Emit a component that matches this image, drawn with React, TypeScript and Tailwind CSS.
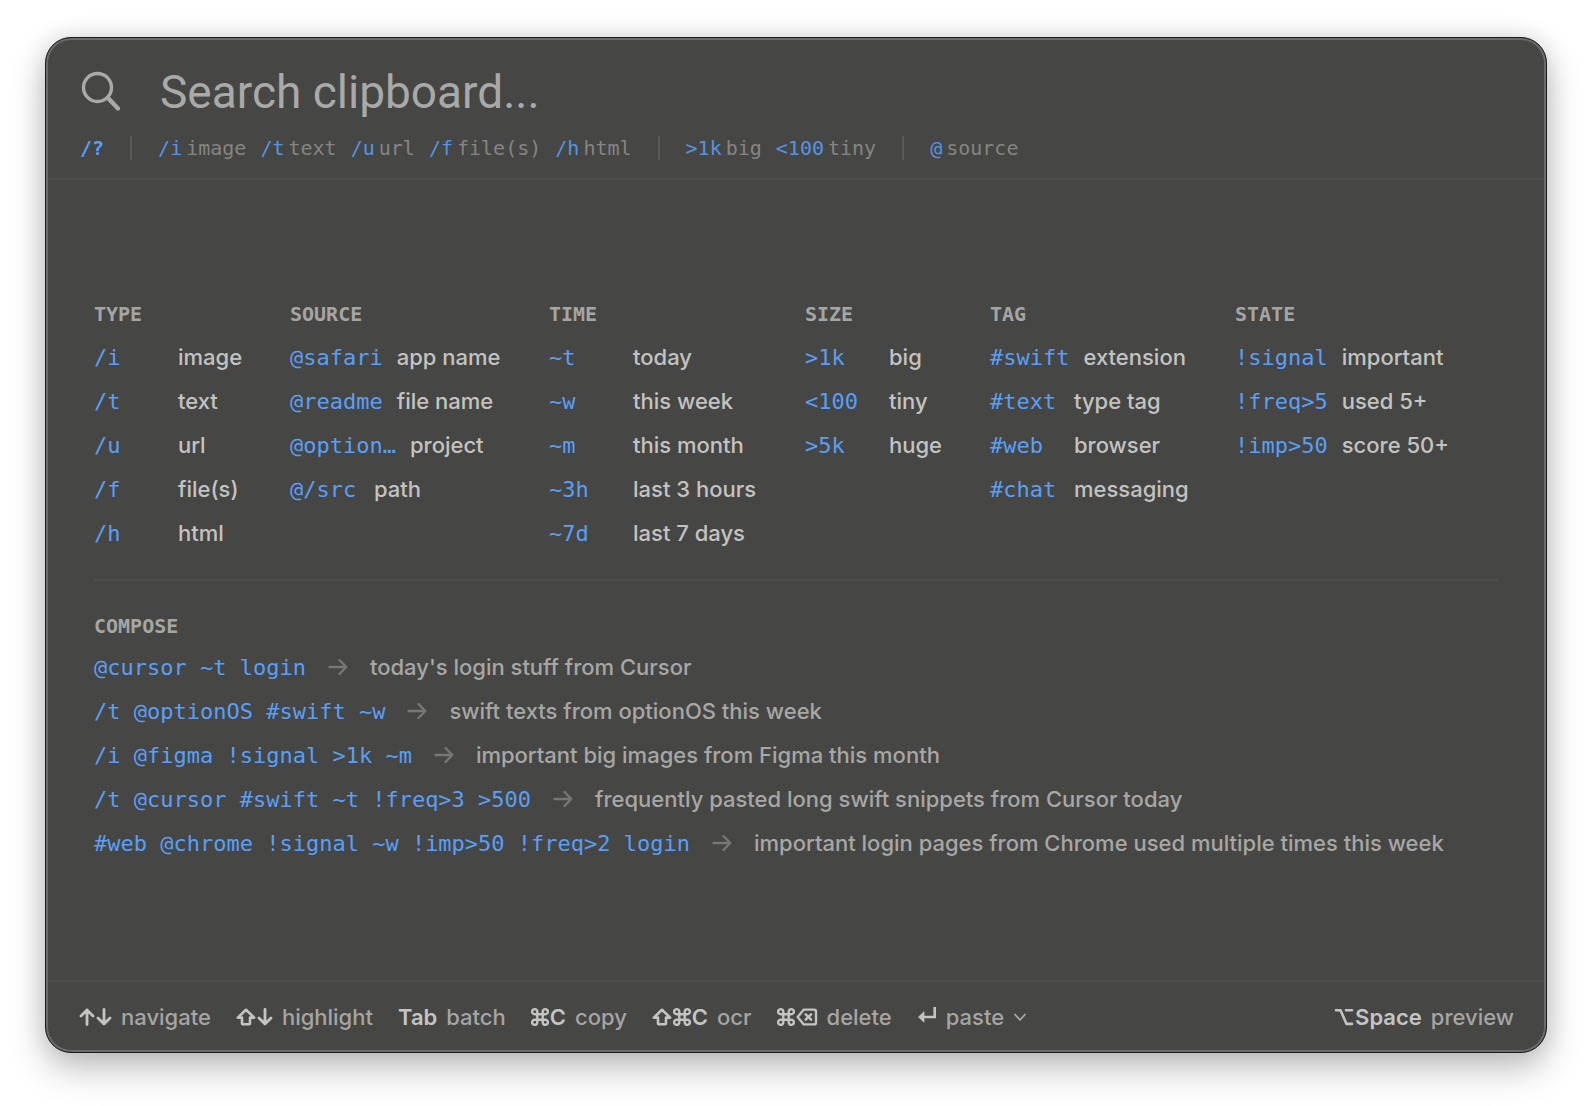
import React from 'react';

interface Hint {
    token: string;
    label: string;
}

interface Section {
    title: string;
    rows: Hint[];
}

const chipGroups: Hint[][] = [
    [
        { token: '/i', label: 'image' },
        { token: '/t', label: 'text' },
        { token: '/u', label: 'url' },
        { token: '/f', label: 'file(s)' },
        { token: '/h', label: 'html' },
    ],
    [
        { token: '>1k', label: 'big' },
        { token: '<100', label: 'tiny' },
    ],
    [{ token: '@', label: 'source' }],
];

const sections: Section[] = [
    {
        title: 'TYPE',
        rows: [
            { token: '/i', label: 'image' },
            { token: '/t', label: 'text' },
            { token: '/u', label: 'url' },
            { token: '/f', label: 'file(s)' },
            { token: '/h', label: 'html' },
        ],
    },
    {
        title: 'SOURCE',
        rows: [
            { token: '@safari', label: 'app name' },
            { token: '@readme', label: 'file name' },
            { token: '@option…', label: 'project' },
            { token: '@/src', label: 'path' },
        ],
    },
    {
        title: 'TIME',
        rows: [
            { token: '~t', label: 'today' },
            { token: '~w', label: 'this week' },
            { token: '~m', label: 'this month' },
            { token: '~3h', label: 'last 3 hours' },
            { token: '~7d', label: 'last 7 days' },
        ],
    },
    {
        title: 'SIZE',
        rows: [
            { token: '>1k', label: 'big' },
            { token: '<100', label: 'tiny' },
            { token: '>5k', label: 'huge' },
        ],
    },
    {
        title: 'TAG',
        rows: [
            { token: '#swift', label: 'extension' },
            { token: '#text', label: 'type tag' },
            { token: '#web', label: 'browser' },
            { token: '#chat', label: 'messaging' },
        ],
    },
    {
        title: 'STATE',
        rows: [
            { token: '!signal', label: 'important' },
            { token: '!freq>5', label: 'used 5+' },
            { token: '!imp>50', label: 'score 50+' },
        ],
    },
];

const examples: Hint[] = [
    { token: '@cursor ~t login', label: "today's login stuff from Cursor" },
    { token: '/t @optionOS #swift ~w', label: 'swift texts from optionOS this week' },
    { token: '/i @figma !signal >1k ~m', label: 'important big images from Figma this month' },
    { token: '/t @cursor #swift ~t !freq>3 >500', label: 'frequently pasted long swift snippets from Cursor today' },
    { token: '#web @chrome !signal ~w !imp>50 !freq>2 login', label: 'important login pages from Chrome used multiple times this week' },
];

const iconProps = {
    fill: 'none',
    stroke: 'currentColor',
    strokeLinecap: 'round' as const,
    strokeLinejoin: 'round' as const,
    'aria-hidden': true,
};

const SearchIcon = () => (
    <svg width="40" height="40" viewBox="0 0 40 40" {...iconProps} strokeWidth="3.4">
        <circle cx="17.5" cy="16.5" r="14" />
        <path d="M28 27 38 37.5" strokeWidth="4.4" />
    </svg>
);

const UpIcon = () => (
    <svg width="16" height="20" viewBox="0 0 16 20" {...iconProps} strokeWidth="2.8">
        <path d="M8 17.5V3M2 9l6-6 6 6" />
    </svg>
);

const DownIcon = () => (
    <svg width="16" height="20" viewBox="0 0 16 20" {...iconProps} strokeWidth="2.8">
        <path d="M8 2.5V17M2 11l6 6 6-6" />
    </svg>
);

const ShiftIcon = () => (
    <svg width="20" height="20" viewBox="0 0 20 20" {...iconProps} strokeWidth="2.6">
        <path d="M10 2.8 1.8 10.6H6V16.2q0 1 1 1h6q1 0 1-1V10.6h4.2Z" />
    </svg>
);

const CommandIcon = () => (
    <svg width="18" height="20" viewBox="0 0 18 20" {...iconProps} strokeWidth="2.4">
        <path d="M6.3 7.3V4.8A2.6 2.6 0 1 0 3.7 7.3H14.3A2.6 2.6 0 1 0 11.7 4.8V15.2A2.6 2.6 0 1 0 14.3 12.7H3.7A2.6 2.6 0 1 0 6.3 15.2Z" />
    </svg>
);

const DeleteIcon = () => (
    <svg width="22" height="20" viewBox="0 0 22 20" {...iconProps} strokeWidth="2.4">
        <path d="M7.8 2.6H18Q20 2.6 20 4.6V15.4Q20 17.4 18 17.4H7.8L1.7 10Z" />
        <path d="m9.7 7.3 5.4 5.4M15.1 7.3 9.7 12.7" />
    </svg>
);

const ReturnIcon = () => (
    <svg width="20" height="20" viewBox="0 0 20 20" {...iconProps} strokeLinecap="butt" strokeLinejoin="miter" strokeWidth="2.6">
        <path d="M17.7 0V10H5" />
        <path d="M7 4.8V15.2L1.5 10Z" fill="currentColor" strokeWidth="0.8" strokeLinejoin="round" />
    </svg>
);

const OptionIcon = () => (
    <svg width="20" height="20" viewBox="0 0 20 20" {...iconProps} strokeWidth="2.6">
        <path d="M2 3.2H6.5L12.5 16.9H18M12 3.2H18" />
    </svg>
);

const ChevronIcon = () => (
    <svg width="14" height="10" viewBox="0 0 14 10" {...iconProps} strokeWidth="1.8">
        <path d="m2 2.5 5 5.5 5-5.5" />
    </svg>
);

const ArrowIcon = () => (
    <svg width="20" height="20" viewBox="0 0 20 20" {...iconProps} strokeWidth="2.4" className="shrink-0 text-[#777775]">
        <path d="M1.5 10H18M11.5 3 18.3 10l-6.8 7" />
    </svg>
);

const Separator = () => <span className="h-6 w-[2px] bg-[#5a5a58]" />;

const Token: React.FC<{ children: React.ReactNode }> = ({ children }) => (
    <code className="font-['DejaVu_Sans_Mono',monospace] text-[22px] whitespace-pre text-[#5a9ff7]">{children}</code>
);

const Title: React.FC<{ children: React.ReactNode }> = ({ children }) => (
    <h2 className="font-['DejaVu_Sans_Mono',monospace] text-[20px] leading-[26px] font-bold text-[#a5a5a3]">{children}</h2>
);

interface ShortcutProps {
    keys: React.ReactNode;
    label: string;
    children?: React.ReactNode;
}

const Shortcut: React.FC<ShortcutProps> = ({ keys, label, children }) => (
    <button type="button" className="flex items-center gap-[9px] text-[22px] leading-7 font-medium whitespace-nowrap text-[#a5a5a3]">
        <kbd className="flex items-center gap-px font-['Inter',sans-serif] font-semibold text-[#c4c4c2]">{keys}</kbd>
        <span>{label}</span>
        {children}
    </button>
);

export default function App() {
    return (
        <div className="flex min-h-screen flex-col bg-white px-[45px] pt-[37px] pb-[53px] font-['Inter',sans-serif]">
            <div className="flex flex-1 flex-col rounded-[26px] border border-[#1c1c1c] bg-[#464644] shadow-[inset_0_0_0_2px_#6b6b69,0_16px_36px_rgba(0,0,0,0.24),0_0_24px_rgba(0,0,0,0.12)]">
                <header className="mx-[2px] border-b-2 border-[#4c4c4a] px-8 pt-[25px] pb-[18px]">
                    <label className="flex items-center gap-10 text-[#a9a9a7]">
                        <SearchIcon />
                        <input
                            type="text"
                            aria-label="Search clipboard"
                            placeholder="Search clipboard..."
                            className="h-14 min-w-0 flex-1 bg-transparent pt-[2px] font-['Roboto',sans-serif] text-[46px] outline-none placeholder:text-[#a9a9a7]"
                        />
                    </label>
                    <div className="mt-[17px] flex h-6 items-center gap-[26px] font-['DejaVu_Sans_Mono',monospace] text-[20px]">
                        <button type="button" className="font-bold text-[#5a9ff7]">/?</button>
                        {chipGroups.map((group, i) => (
                            <React.Fragment key={i}>
                                <Separator />
                                <div className="flex gap-[14px]">
                                    {group.map((chip) => (
                                        <button key={chip.token} type="button" className="flex gap-1">
                                            <span className="text-[#5594e3]">{chip.token}</span>
                                            <span className="text-[#858583]">{chip.label}</span>
                                        </button>
                                    ))}
                                </div>
                            </React.Fragment>
                        ))}
                    </div>
                </header>

                <main className="flex flex-1 flex-col justify-center px-12 pb-[2px]">
                    <div className="grid grid-cols-[196px_259px_256px_185px_245px_1fr]">
                        {sections.map((section) => (
                            <section key={section.title}>
                                <Title>{section.title}</Title>
                                <ul className="mt-4 flex flex-col gap-4">
                                    {section.rows.map((row) => (
                                        <li key={row.token} className="flex h-7 items-center gap-[14px] whitespace-nowrap">
                                            <span className="min-w-[70px]"><Token>{row.token}</Token></span>
                                            <span className="text-[22px] font-medium text-[#c3c3c1]">{row.label}</span>
                                        </li>
                                    ))}
                                </ul>
                            </section>
                        ))}
                    </div>
                    <hr className="my-8 border-t-2 border-[#4e4e4c]" />
                    <section>
                        <Title>COMPOSE</Title>
                        <ul className="mt-[14px] flex flex-col gap-4">
                            {examples.map((row) => (
                                <li key={row.token} className="flex h-7 items-center gap-[22px] whitespace-nowrap">
                                    <Token>{row.token}</Token>
                                    <ArrowIcon />
                                    <span className="text-[22px] font-medium text-[#a7a7a5]">{row.label}</span>
                                </li>
                            ))}
                        </ul>
                    </section>
                </main>

                <footer className="mx-[2px] flex items-center gap-[25px] border-t-2 border-[#4c4c4a] pt-[21px] pr-[30px] pb-[21px] pl-[31px]">
                    <Shortcut keys={<><UpIcon /><DownIcon /></>} label="navigate" />
                    <Shortcut keys={<><ShiftIcon /><DownIcon /></>} label="highlight" />
                    <Shortcut keys="Tab" label="batch" />
                    <Shortcut keys={<><CommandIcon />C</>} label="copy" />
                    <Shortcut keys={<><ShiftIcon /><CommandIcon />C</>} label="ocr" />
                    <Shortcut keys={<><CommandIcon /><DeleteIcon /></>} label="delete" />
                    <Shortcut keys={<ReturnIcon />} label="paste">
                        <ChevronIcon />
                    </Shortcut>
                    <div className="ml-auto">
                        <Shortcut keys={<><OptionIcon />Space</>} label="preview" />
                    </div>
                </footer>
            </div>
        </div>
    );
}
